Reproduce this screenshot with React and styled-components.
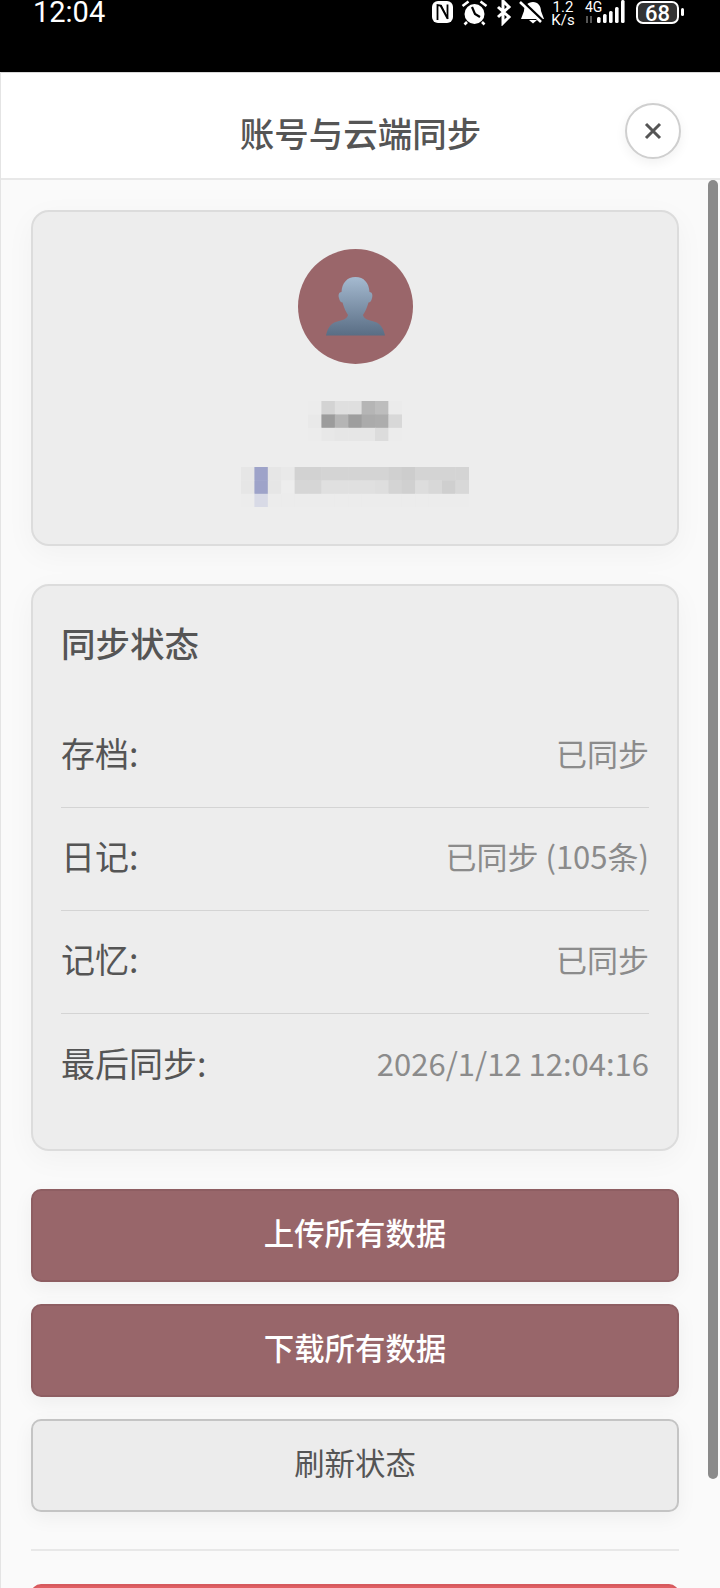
import React from 'react'
import styled, { createGlobalStyle } from 'styled-components'

const GlobalStyle = createGlobalStyle`
  html, body {
    margin: 0;
    padding: 0;
    background: #000;
  }
  body {
    font-family: "Noto Sans CJK SC", "Noto Sans", sans-serif;
  }
`

const Screen = styled.div`
  width: 720px;
  height: 1588px;
  overflow: hidden;
  display: flex;
  flex-direction: column;
  background: #000;
`

const StatusBar = styled.div`
  height: 72px;
  flex: none;
  display: flex;
  align-items: flex-start;
  justify-content: space-between;
  padding: 0 28px 0 33px;
  box-sizing: border-box;
  color: #fff;
`

const Clock = styled.div`
  font-family: Roboto, sans-serif;
  font-size: 29px;
  line-height: 25px;
`

const StatusIcons = styled.div`
  display: flex;
  align-items: flex-start;
`

const Sheet = styled.div`
  flex: 1;
  min-height: 0;
  display: flex;
  flex-direction: column;
  background: #fafafa;
  border-left: 1px solid #e4e4e4;
`

const Header = styled.div`
  position: relative;
  height: 108px;
  flex: none;
  box-sizing: border-box;
  padding-top: 12px;
  display: flex;
  align-items: center;
  justify-content: center;
  background: #fff;
  border-top: 1px solid #d8d8d8;
  border-bottom: 2px solid #e8e8e8;
`

const Title = styled.h1`
  margin: 0;
  font-size: 34.5px;
  font-weight: 500;
  color: #555;
`

const CloseButton = styled.button`
  position: absolute;
  top: 30px;
  right: 39px;
  width: 56px;
  height: 56px;
  padding: 0;
  display: flex;
  align-items: center;
  justify-content: center;
  background: #fff;
  border: 2px solid #cfcfcf;
  border-radius: 50%;
  box-shadow: 0 4px 12px rgba(0, 0, 0, 0.06);
`

const Body = styled.div`
  position: relative;
  flex: 1;
  min-height: 0;
  overflow: hidden;
  display: flex;
  flex-direction: column;
  gap: 22px;
  padding: 30px 41px 0 30px;
`

const ScrollThumb = styled.div`
  position: absolute;
  top: 0;
  right: 2px;
  width: 10px;
  height: 1299px;
  border-radius: 5px;
  background: #8a8a8a;
`

const Card = styled.div`
  flex: none;
  box-sizing: border-box;
  background: #ededed;
  border: 2px solid #dcdcdc;
  border-radius: 18px;
  box-shadow: 0 8px 30px rgba(0, 0, 0, 0.04);
`

const ProfileCard = styled(Card)`
  height: 336px;
  margin-bottom: 16px;
  padding-top: 37px;
  display: flex;
  flex-direction: column;
  align-items: center;
`

const Avatar = styled.div`
  width: 115px;
  height: 115px;
  flex: none;
  display: flex;
  align-items: center;
  justify-content: center;
  border-radius: 50%;
  background: #9a666a;
`

const Mosaic = styled.svg`
  display: block;
  flex: none;
  margin-top: ${(p) => p.$top}px;
  filter: blur(0.6px);
`

const StatusCard = styled(Card)`
  height: 567px;
  margin-bottom: 16px;
  padding: 28px 28px 0;
`

const CardTitle = styled.h2`
  margin: 0 0 29px;
  height: 62px;
  line-height: 57px;
  font-size: 34.5px;
  font-weight: 500;
  color: #555;
`

const Row = styled.div`
  height: 103px;
  box-sizing: border-box;
  padding-bottom: 7px;
  display: flex;
  align-items: center;
  justify-content: space-between;
  border-bottom: ${(p) => (p.$last ? 'none' : '1px solid #d4d4d4')};
`

const Label = styled.span`
  font-size: 34px;
  color: #555;
`

const Value = styled.span`
  font-size: 31px;
  color: #8b8b8b;
`

const ActionButton = styled.button`
  flex: none;
  height: 93px;
  box-sizing: border-box;
  padding: 0 0 8px;
  font-family: inherit;
  font-size: 30.4px;
  font-weight: ${(p) => (p.$primary ? 500 : 400)};
  color: ${(p) => (p.$primary ? '#fff' : '#555')};
  background: ${(p) => (p.$primary ? '#98666a' : '#ececec')};
  border: 2px solid ${(p) => (p.$primary ? '#8e5e62' : '#c4c4c4')};
  border-radius: 10px;
  box-shadow: 0 6px 20px rgba(0, 0, 0, 0.05);
`

const Divider = styled.div`
  flex: none;
  height: 2px;
  margin-top: 15px;
  background: #e8e8e8;
`

const DangerButton = styled.div`
  flex: none;
  height: 60px;
  margin-top: 11px;
  box-sizing: border-box;
  border: 2px solid #d65a5e;
  border-radius: 10px 10px 0 0;
  background: #e05f63;
`

const nameCells = [
  ['#ececec', '#d3d3d3', '#dfdfdf', '#dfdfdf', '#b5b5b5', '#bdbdbd', '#ebebeb'],
  ['#e9e9e9', '#9c9c9c', '#b5b5b5', '#9e9e9e', '#ababab', '#adadad', '#d8d8d8'],
  ['#ececec', '#e8e8e8', '#e6e6e6', '#e6e6e6', '#e6e6e6', '#dcdcdc', '#ececec'],
]

const mailCells = [
  ['#e6e6e6', '#9ea3c9', '#e6e6e6', '#e9e9e9', '#d2d2d2', '#d2d2d2', '#d4d4d4', '#d4d4d4', '#d4d4d4', '#d4d4d4', '#d4d4d4', '#d0d0d0', '#cdcdcd', '#d4d4d4', '#d4d4d4', '#d4d4d4', '#d4d4d4'],
  ['#e6e6e6', '#9ea3c9', '#e6e6e6', '#ededed', '#d6d6d6', '#d6d6d6', '#e0e0e0', '#e0e0e0', '#e0e0e0', '#e0e0e0', '#dedede', '#d4d4d4', '#d0d0d0', '#dddddd', '#d8d8d8', '#cfcfcf', '#d8d8d8'],
  ['#ececec', '#d8dae6', '#ececec', '#ececec', '#ececec', '#ececec', '#ececec', '#ececec', '#ececec', '#ececec', '#ececec', '#ececec', '#ececec', '#ececec', '#ececec', '#ececec', '#ececec'],
]

const MosaicBlock = ({ cells, top }) => {
  const size = 13.4
  return (
    <Mosaic $top={top} width={cells[0].length * size} height={cells.length * size}>
      {cells.map((row, y) =>
        row.map((fill, x) => (
          <rect key={`${x}-${y}`} x={x * size} y={y * size} width={size + 0.5} height={size + 0.5} fill={fill} />
        ))
      )}
    </Mosaic>
  )
}

const SignalIcons = () => (
  <svg width="262" height="26" viewBox="0 0 262 26" fill="#fff">
    {/* nfc */}
    <rect x="2" y="1" width="21" height="22" rx="6" />
    <path d="M7.500 20V5l3 .5 7 13 0-14" fill="none" stroke="#000" strokeWidth="1.800" />
    <path d="M11 5l7 14" fill="none" stroke="#000" strokeWidth="1.200" />
    {/* alarm */}
    <circle cx="44.500" cy="14" r="10" />
    <path d="M42 7l3 7 5 3" fill="none" stroke="#000" strokeWidth="2.200" />
    <path d="M32.500 6l6-4.500M56.500 6l-6-4.500M37 22l-2.500 2.500M52 22l2.500 2.500" fill="none" stroke="#fff" strokeWidth="2.600" />
    {/* bluetooth */}
    <path d="M68 7l11 10-6 6V1l6 6-11 10" fill="none" stroke="#fff" strokeWidth="3" />
    {/* muted bell */}
    <path d="M103 2c5 0 8 4 8 9l3 8H91l3-8c0-5 4-9 9-9z" />
    <path d="M99 20h8l-4 3.500z" />
    <path d="M92 1l21 20" stroke="#000" strokeWidth="3" />
    <path d="M90 2l21 20" stroke="#fff" strokeWidth="2.600" />
    {/* network speed */}
    <text x="133" y="12" textAnchor="middle" fontFamily="Roboto, sans-serif" fontSize="15">1.2</text>
    <text x="133" y="24.500" textAnchor="middle" fontFamily="Roboto, sans-serif" fontSize="15">K/s</text>
    {/* cell signal */}
    <text x="155" y="12" fontFamily="Roboto, sans-serif" fontSize="14">4G</text>
    <path d="M157 16v7M161 16v7" stroke="#555" strokeWidth="2" />
    <rect x="167" y="17" width="3.600" height="6" rx="1.500" />
    <rect x="173" y="14" width="3.600" height="9" rx="1.500" />
    <rect x="179" y="11" width="3.600" height="12" rx="1.500" />
    <rect x="185" y="7" width="3.600" height="16" rx="1.500" />
    <rect x="191" y="0" width="3.600" height="23" rx="1.500" />
    {/* battery */}
    <rect x="207" y="2" width="41" height="21" rx="6" fill="#333" stroke="#fff" strokeWidth="2" />
    <text x="227.500" y="20.500" textAnchor="middle" fontFamily="Roboto, sans-serif" fontSize="22" fontWeight="500">68</text>
    <rect x="251" y="8" width="3" height="8" rx="1.500" />
  </svg>
)

const PersonIcon = () => (
  <svg width="59" height="59" viewBox="0 0 59 59">
    <defs>
      <linearGradient id="person" x1="0" y1="0" x2="0" y2="1">
        <stop offset="0" stopColor="#a5bad0" />
        <stop offset="1" stopColor="#596d84" />
      </linearGradient>
    </defs>
    <path
      d="M29.500 0C38 0 43 6 43.500 15C46 15 47 18 46 21C45.500 24 44 25.500 42.500 25.500C41 31 39 35 37 38C37.500 41 41 43 46 44C53 45.500 57 49 59 58.500L0 58.500C2 49 6 45.500 13 44C18 43 21.500 41 22 38C20 35 18 31 16.500 25.500C15 25.500 13.500 24 13 21C12 18 13 15 15.500 15C16 6 21 0 29.500 0Z"
      fill="url(#person)"
    />
  </svg>
)

const rows = [
  { label: '存档:', value: '已同步' },
  { label: '日记:', value: '已同步 (105条)' },
  { label: '记忆:', value: '已同步' },
  { label: '最后同步:', value: '2026/1/12 12:04:16' },
]

const App = () => (
  <Screen>
    <GlobalStyle />
    <StatusBar>
      <Clock>12:04</Clock>
      <StatusIcons>
        <SignalIcons />
      </StatusIcons>
    </StatusBar>
    <Sheet>
      <Header>
        <Title>账号与云端同步</Title>
        <CloseButton aria-label="关闭">
          <svg width="18" height="18" viewBox="0 0 18 18">
            <path d="M2 2l14 14M16 2L2 16" stroke="#555" strokeWidth="3" />
          </svg>
        </CloseButton>
      </Header>
      <Body>
        <ScrollThumb />
        <ProfileCard>
          <Avatar>
            <PersonIcon />
          </Avatar>
          <MosaicBlock cells={nameCells} top={37} />
          <MosaicBlock cells={mailCells} top={26} />
        </ProfileCard>
        <StatusCard>
          <CardTitle>同步状态</CardTitle>
          {rows.map((row, i) => (
            <Row key={row.label} $last={i === rows.length - 1}>
              <Label>{row.label}</Label>
              <Value>{row.value}</Value>
            </Row>
          ))}
        </StatusCard>
        <ActionButton $primary>上传所有数据</ActionButton>
        <ActionButton $primary>下载所有数据</ActionButton>
        <ActionButton>刷新状态</ActionButton>
        <Divider />
        <DangerButton />
      </Body>
    </Sheet>
  </Screen>
)

export default App
